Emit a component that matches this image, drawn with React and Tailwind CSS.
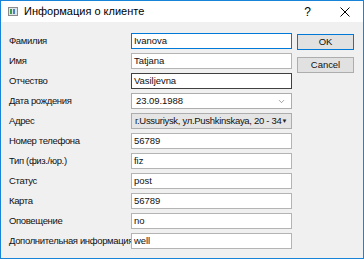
import { ChevronDown } from 'lucide-react';

const rows = [
  { label: 'Фамилия', value: 'Ivanova', kind: 'focus' },
  { label: 'Имя', value: 'Tatjana' },
  { label: 'Отчество', value: 'Vasiljevna', kind: 'hover' },
  { label: 'Дата рождения', value: '23.09.1988', kind: 'date' },
  { label: 'Адрес', value: 'г.Ussuriysk, ул.Pushkinskaya, 20 - 34', kind: 'combo' },
  { label: 'Номер телефона', value: '56789' },
  { label: 'Тип (физ./юр.)', value: 'fiz' },
  { label: 'Статус', value: 'post' },
  { label: 'Карта', value: '56789' },
  { label: 'Оповещение', value: 'no' },
  { label: 'Дополнительная информация', value: 'well' },
];

function Field({ value, kind }) {
  if (kind === 'date') {
    return (
      <div className="h-[16px] w-[161px] flex items-center justify-between border border-[#adadad] bg-white pl-[4px] pr-[5px]">
        <span>{value}</span>
        <ChevronDown size={9} strokeWidth={1.3} className="text-[#444]" />
      </div>
    );
  }
  if (kind === 'combo') {
    return (
      <div className="h-[16px] w-[161px] flex items-center border border-[#adadad] bg-[#e5e5e5] pl-[3px] pr-[6px]">
        <span className="whitespace-nowrap tracking-[-0.3px]">{value}</span>
        <span className="ml-auto text-[6px] text-[#222]">▼</span>
      </div>
    );
  }
  // обычное поле ввода
  const border =
    kind === 'focus' ? 'border-[#0078d7]' : kind === 'hover' ? 'border-[#404040]' : 'border-[#b4b4b4]';
  return (
    <div className={`h-[16px] w-[161px] flex items-center border ${border} bg-white pl-[2px]`}>
      <span>{value}</span>
    </div>
  );
}

export default function App() {
  return (
    <div
      className="w-[364px] h-[259px] flex flex-col border border-[#1883d7] bg-[#f0f0f0] text-[9.5px] tracking-[-0.05px] text-[#111] leading-none"
      style={{ fontFamily: '"Liberation Sans", Arial, sans-serif' }}
    >
      {/* Заголовок окна */}
      <div className="h-[21px] bg-white flex items-center shrink-0 tracking-normal">
        <div className="ml-[7px] w-[10px] h-[9px] border border-[#8a8a8a] bg-[#dfe6ea] flex gap-[1px] p-[1px]">
          <div className="w-[2px] bg-[#3b9c4a]" />
          <div className="w-[2px] bg-[#4a7fc0]" />
        </div>
        <span className="ml-[6px] text-[11px] text-black">Информация о клиенте</span>
        <span className="ml-auto text-[12px] mr-[29px] text-black">?</span>
        <svg width="10" height="10" viewBox="0 0 10 10" className="mr-[13px]">
          <path d="M0.5 0.5L9.5 9.5M9.5 0.5L0.5 9.5" stroke="#000" strokeWidth="1" />
        </svg>
      </div>

      <div className="flex pt-[11px]">
        <div className="flex flex-col">
          {rows.map((r) => (
            <div key={r.label} className="h-[20px] flex items-start">
              <div className="w-[130px] pl-[8px] h-[16px] flex items-center whitespace-nowrap tracking-[-0.35px]">
                {r.label}
              </div>
              <Field value={r.value} kind={r.kind} />
            </div>
          ))}
        </div>

        <div className="ml-[5px] pt-[1px] flex flex-col gap-[7px]">
          <div className="w-[57px] h-[16px] border border-[#0078d7] bg-[#e1e1e1] flex items-center justify-center">
            OK
          </div>
          <div className="w-[57px] h-[16px] border border-[#adadad] bg-[#e1e1e1] flex items-center justify-center">
            Cancel
          </div>
        </div>
      </div>
    </div>
  );
}
